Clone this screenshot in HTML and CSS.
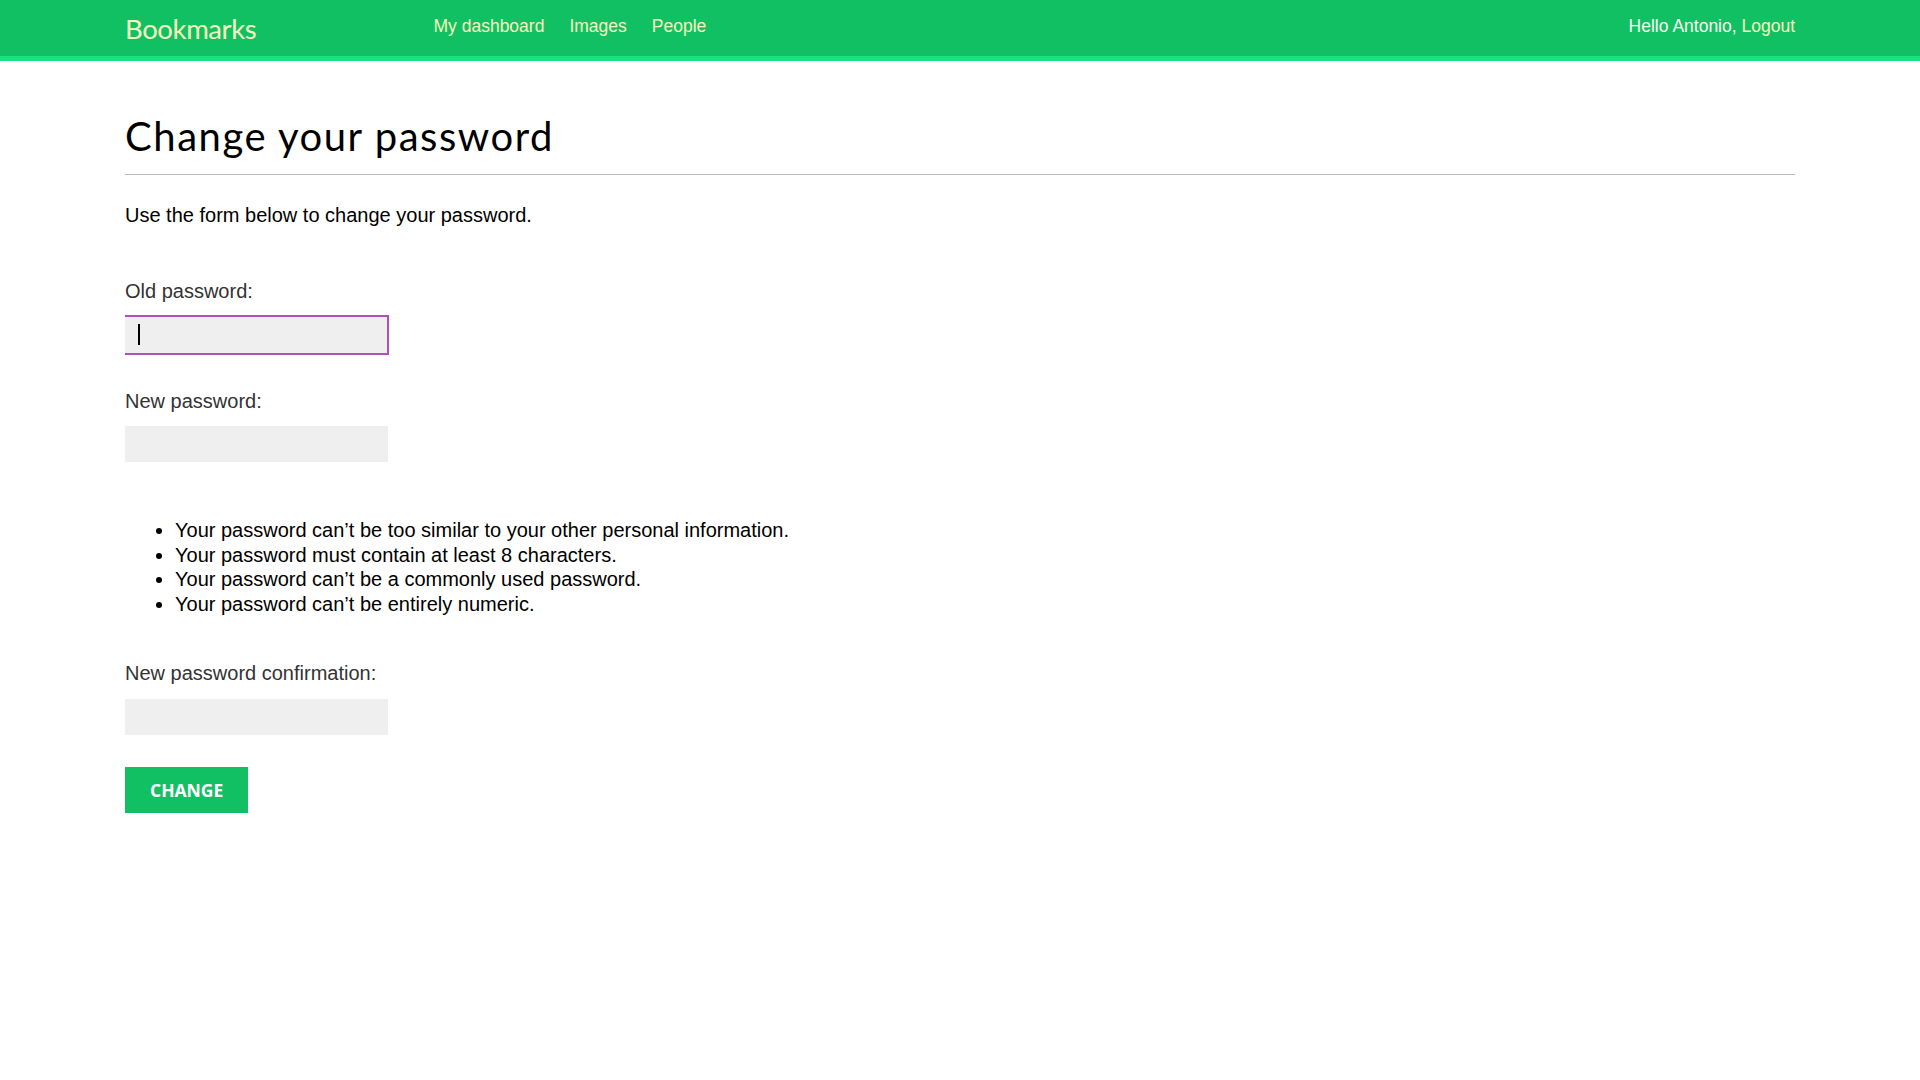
FILE: index.html
```html
<!DOCTYPE html>
<html lang="en">
<head>
<meta charset="utf-8">
<title>Change your password</title>
<link rel="stylesheet" href="styles.css">
</head>
<body>
<div class="header">
  <span class="logo">Bookmarks</span>
  <ul class="menu">
    <li><a href="#">My dashboard</a></li>
    <li><a href="#">Images</a></li>
    <li><a href="#">People</a></li>
  </ul>
  <span class="user">Hello Antonio, <a href="#">Logout</a></span>
</div>
<div class="content">
  <h1>Change your password</h1>
  <p class="intro">Use the form below to change your password.</p>
  <form class="form">
    <div class="field field-first">
      <label for="old">Old password:</label>
      <div class="input-wrap">
        <input id="old" class="text-input focused" type="password">
        <span class="caret"></span>
      </div>
    </div>
    <div class="field field-second">
      <label for="new1">New password:</label>
      <input id="new1" class="text-input" type="password">
    </div>
    <ul class="helptext">
      <li>Your password can’t be too similar to your other personal information.</li>
      <li>Your password must contain at least 8 characters.</li>
      <li>Your password can’t be a commonly used password.</li>
      <li>Your password can’t be entirely numeric.</li>
    </ul>
    <div class="field field-third">
      <label for="new2">New password confirmation:</label>
      <input id="new2" class="text-input" type="password">
    </div>
    <button type="button" class="button">Change</button>
  </form>
</div>
</body>
</html>
```
FILE: styles.css
```css
html, body {
  margin: 0;
  padding: 0;
  background: #ffffff;
}

body {
  font-family: "Liberation Sans", Arial, sans-serif;
  font-size: 20px;
  color: #000;
}

a {
  text-decoration: none;
}

.header {
  display: flex;
  align-items: flex-start;
  box-sizing: border-box;
  height: 61px;
  padding: 12.5px 125px;
  background: #12c064;
  border-bottom: 5px solid #1ce07b;
  font-size: 17.5px;
}

.logo {
  flex: 0 0 308.5px;
  font-family: Lato, "Open Sans", sans-serif;
  font-size: 27.5px;
  line-height: 31px;
  letter-spacing: -0.4px;
  color: #f4f7bd;
}

.menu {
  display: flex;
  gap: 25px;
  margin: 3.5px 0 0 0;
  padding: 0;
  list-style: none;
  line-height: 20px;
}

.menu a {
  color: #f4f7bd;
}

.user {
  margin: 3.5px 0 0 auto;
  line-height: 20px;
  color: #f7fbef;
}

.user a {
  color: #f4f7bd;
}

.content {
  padding: 0 125px;
}

h1 {
  margin: 51px 0 0 0;
  padding: 0 0 14px 0;
  border-bottom: 1px solid #bbbbbb;
  font-family: Lato, "Open Sans", sans-serif;
  font-weight: normal;
  font-size: 40px;
  line-height: 48px;
  letter-spacing: 1.55px;
  color: #000;
}

.intro {
  margin: 29px 0 0 0;
  line-height: 23px;
}

.form {
  margin: 0;
}

.field label {
  display: block;
  line-height: 23px;
  color: #333333;
  margin-bottom: 14px;
}

.field-first {
  margin-top: 53px;
}

.field-second {
  margin-top: 35px;
}

.field-second label {
  margin-bottom: 13px;
}

.field-third {
  margin-top: 46px;
}

.text-input {
  display: block;
  box-sizing: border-box;
  width: 263px;
  height: 36px;
  margin: 0;
  padding: 0 12.5px;
  border: 0;
  background: #efefef;
  font-size: 17.5px;
  outline: none;
}

.input-wrap {
  position: relative;
  width: 264px;
  margin-top: -2px;
}

.text-input.focused {
  width: 264px;
  height: 40px;
  border: 2px solid #b34db8;
  border-left: 0;
}

.caret {
  position: absolute;
  left: 12.5px;
  top: 9px;
  width: 2px;
  height: 21px;
  background: #000;
}

.helptext {
  margin: 56px 0 0 0;
  padding: 0 0 0 50px;
}

.helptext li {
  line-height: 24.5px;
}

.button {
  display: block;
  box-sizing: border-box;
  height: 46px;
  margin-top: 32px;
  padding: 0 25px;
  border: 0;
  background: #12c064;
  color: #ffffff;
  font-family: "Open Sans", sans-serif;
  font-weight: bold;
  font-size: 17.5px;
  text-transform: uppercase;
  cursor: pointer;
}
```
